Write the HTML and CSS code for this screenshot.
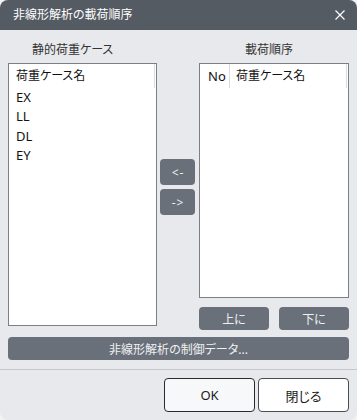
FILE: index.html
```html
<!DOCTYPE html>
<html lang="ja">
<head>
<meta charset="utf-8">
<link rel="stylesheet" href="styles.css">
</head>
<body>
<div class="dialog">
  <div class="titlebar">
    <span class="title">非線形解析の載荷順序</span>
    <svg class="close" width="10" height="10" viewBox="0 0 10 10"><path d="M0.5 0.5 L9.5 9.5 M9.5 0.5 L0.5 9.5" stroke="#fff" stroke-width="1.2" fill="none"/></svg>
  </div>
  <div class="content">
    <div class="columns">
      <div class="col-left">
        <div class="label label-left">静的荷重ケース</div>
        <div class="list list-left">
          <div class="list-head">
            <div class="hcell hcell-name">荷重ケース名</div>
            <div class="hcell hcell-end"></div>
          </div>
          <div class="item">EX</div>
          <div class="item">LL</div>
          <div class="item">DL</div>
          <div class="item">EY</div>
        </div>
      </div>
      <div class="col-mid">
        <button class="btn btn-arrow">&lt;-</button>
        <button class="btn btn-arrow">-&gt;</button>
      </div>
      <div class="col-right">
        <div class="label label-right">載荷順序</div>
        <div class="list list-right">
          <div class="list-head">
            <div class="hcell hcell-no">No</div>
            <div class="hcell hcell-name2">荷重ケース名</div>
            <div class="hcell hcell-end"></div>
          </div>
        </div>
        <div class="updown">
          <button class="btn btn-small">上に</button>
          <button class="btn btn-small">下に</button>
        </div>
      </div>
    </div>
    <button class="btn btn-wide">非線形解析の制御データ...</button>
  </div>
  <div class="separator"></div>
  <div class="footer">
    <button class="fbtn fbtn-ok">OK</button>
    <button class="fbtn fbtn-close">閉じる</button>
  </div>
</div>
</body>
</html>
```

FILE: styles.css
```css
* { box-sizing: border-box; }
html, body { margin: 0; padding: 0; }
body {
  background: #f3f3f3;
  font-family: "Noto Sans", "Noto Sans CJK JP", sans-serif;
  font-feature-settings: "palt";
  font-size: 12px;
  color: #1a1a1a;
}
.dialog {
  width: 357px;
  height: 420px;
  background: #e8e9ec;
  border-radius: 8px;
  overflow: hidden;
  display: flex;
  flex-direction: column;
}
.titlebar {
  height: 30px;
  background: #555b63;
  color: #ffffff;
  display: flex;
  align-items: center;
  justify-content: space-between;
  padding: 0 12px 0 13px;
}
.title { font-size: 12px; line-height: 16px; }
.close { display: block; }
.content {
  padding: 0 8px;
  display: flex;
  flex-direction: column;
}
.columns {
  display: flex;
  height: 300px;
}
.col-left { width: 149px; display: flex; flex-direction: column; }
.col-mid {
  width: 42px;
  padding: 129px 0 0 3px;
  display: flex;
  flex-direction: column;
  gap: 4px;
}
.col-right { width: 150px; display: flex; flex-direction: column; }
.label {
  height: 33px;
  padding-top: 12px;
  line-height: 16px;
  color: #333;
  font-size: 12px;
}
.label-left { padding-left: 24px; }
.label-right { padding-left: 46px; }
.list {
  background: #ffffff;
  border: 1px solid #7c7f86;
}
.list-left { height: 263px; }
.list-right { height: 235px; }
.list-head {
  display: flex;
  height: 24px;
  align-items: stretch;
}
.hcell {
  line-height: 24px;
  font-size: 12px;
  color: #111;
}
.hcell-name { flex: 1; padding-left: 7px; }
.hcell-end { width: 1px; background: #dcdcdc; margin-right: 1px; }
.hcell-no {
  width: 30px;
  padding-left: 8px;
  font-size: 13px;
  border-right: 1px solid #dcdcdc;
}
.hcell-name2 { flex: 1; padding-left: 6px; }
.item {
  height: 19.4px;
  line-height: 19.4px;
  padding-left: 7px;
  font-size: 13px;
  color: #111;
}
.btn {
  border: none;
  background: #6a7079;
  color: #eef0f2;
  border-radius: 4px;
  font-family: inherit;
  font-feature-settings: "palt";
  font-size: 12px;
  padding: 0;
  cursor: default;
}
.btn-arrow {
  width: 35px;
  height: 26px;
  font-size: 12px;
  letter-spacing: 1px;
  padding-left: 1px;
}
.updown {
  margin-top: 9px;
  display: flex;
  justify-content: space-between;
}
.btn-small { width: 70px; height: 23px; }
.btn-wide {
  margin-top: 7px;
  height: 23px;
  width: 100%;
}
.separator {
  margin-top: 9px;
  height: 1px;
  background: #c6c7ca;
}
.footer {
  display: flex;
  justify-content: flex-end;
  gap: 3px;
  padding: 8px 8px 0 0;
}
.fbtn {
  width: 91px;
  height: 34px;
  border-radius: 4px;
  font-family: inherit;
  font-feature-settings: "palt";
  font-size: 13px;
  color: #1a1a1a;
  padding: 0;
}
.fbtn-ok { background: #f6f8fa; border: 1px solid #2a2a2a; }
.fbtn-close { background: #ffffff; border: 1px solid #4a4d52; }
```
